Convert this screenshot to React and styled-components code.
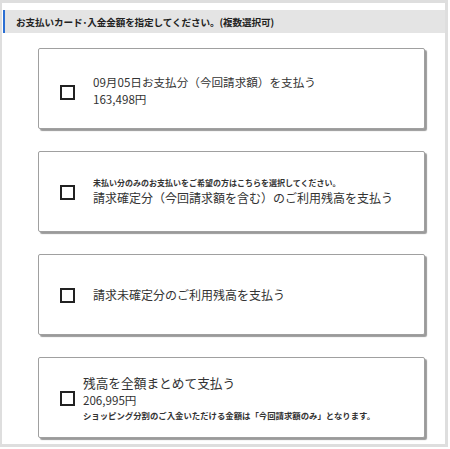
import React from "react";
import styled, { createGlobalStyle } from "styled-components";

const options = [
  {
    id: "current",
    gap: 18,
    offset: 5,
    lines: [
      { text: "09月05日お支払分（今回請求額）を支払う", kind: "main" },
      { text: "163,498円", kind: "main" },
    ],
  },
  {
    id: "confirmed",
    gap: 18,
    offset: 0,
    lines: [
      { text: "未払い分のみのお支払いをご希望の方はこちらを選択してください。", kind: "note" },
      { text: "請求確定分（今回請求額を含む）のご利用残高を支払う", kind: "large" },
    ],
  },
  {
    id: "unconfirmed",
    gap: 18,
    offset: 0,
    lines: [{ text: "請求未確定分のご利用残高を支払う", kind: "large" }],
  },
  {
    id: "all",
    gap: 8,
    offset: 0,
    lines: [
      { text: "残高を全額まとめて支払う", kind: "big" },
      { text: "206,995円", kind: "main" },
      { text: "ショッピング分割のご入金いただける金額は「今回請求額のみ」となります。", kind: "note2" },
    ],
  },
];

const App = () => {
  return (
    <>
      <GlobalStyle />
      <Frame>
        <SectionTitle>お支払いカード･入金金額を指定してください。(複数選択可)</SectionTitle>
        <OptionList>
          {options.map((opt) => (
            <OptionCard key={opt.id} $offset={opt.offset}>
              <CheckBox type="button" aria-label={opt.id} />
              <TextBlock $gap={opt.gap}>
                {opt.lines.map((line, i) => (
                  <Line key={i} $kind={line.kind}>
                    {line.text}
                  </Line>
                ))}
              </TextBlock>
            </OptionCard>
          ))}
        </OptionList>
      </Frame>
    </>
  );
};

// ========== ESTILOS ==========
const GlobalStyle = createGlobalStyle`
  body {
    margin: 0;
    background: #fff;
    font-family: "Noto Sans CJK JP", "Noto Sans", sans-serif;
    color: #333;
  }
`;

const Frame = styled.div`
  box-sizing: border-box;
  width: 448px;
  height: 447px;
  border: 3px solid #dedede;
  border-left-width: 2px;
  padding-top: 7px;
  overflow: hidden;
`;

const SectionTitle = styled.div`
  height: 23px;
  margin-left: 1px;
  background: #e4e4e4;
  border-left: 2px solid #2b6fd3;
  padding-left: 11px;
  display: flex;
  align-items: center;
  font-size: 9.6px;
  font-weight: bold;
  color: #222;
  letter-spacing: -0.1px;
`;

const OptionList = styled.div`
  display: flex;
  flex-direction: column;
  gap: 22px;
  margin: 15px 20px 0 36px;
`;

const OptionCard = styled.div`
  box-sizing: border-box;
  height: 81px;
  border: 1px solid #a0a0a0;
  border-radius: 2px;
  box-shadow: 2px 2px 1px #9a9a9a;
  background: #fff;
  display: flex;
  align-items: center;
  padding: ${(p) => p.$offset}px 0 0 21px;
`;

const CheckBox = styled.button`
  flex: none;
  box-sizing: border-box;
  width: 15px;
  height: 15px;
  margin: 2px 0 0;
  padding: 0;
  border: 2px solid #222;
  background: #fff;
  cursor: pointer;
`;

const TextBlock = styled.div`
  display: flex;
  flex-direction: column;
  margin-left: ${(p) => p.$gap}px;
`;

const sizes = {
  main: { size: "11.6px", lh: "17px", weight: "normal" },
  large: { size: "12px", lh: "18px", weight: "normal" },
  big: { size: "12.7px", lh: "19px", weight: "normal" },
  note: { size: "8px", lh: "12px", weight: "bold" },
  note2: { size: "8.4px", lh: "13px", weight: "bold" },
};

const Line = styled.div`
  font-size: ${(p) => sizes[p.$kind].size};
  line-height: ${(p) => sizes[p.$kind].lh};
  font-weight: ${(p) => sizes[p.$kind].weight};
  white-space: nowrap;
  color: #333;
`;

export default App;
